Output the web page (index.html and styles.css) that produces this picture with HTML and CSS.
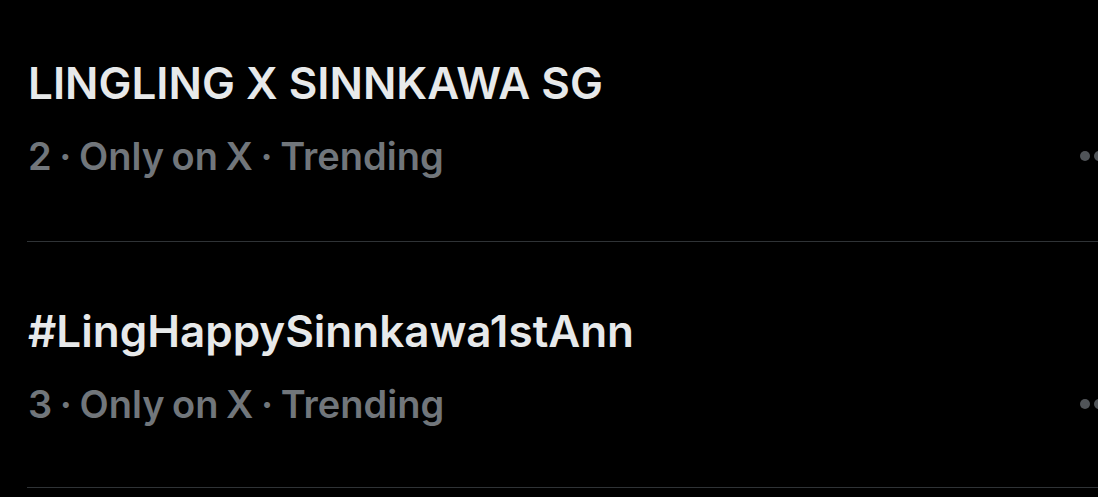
FILE: index.html
```html
<!DOCTYPE html>
<html lang="en">
<head>
  <meta charset="UTF-8" />
  <title>Trending</title>
  <link rel="stylesheet" href="styles.css">
</head>
<body>
  <div class="trends">
    <div class="trend">
      <div class="trend-name">LINGLING X SINNKAWA SG</div>
      <div class="trend-row">
        <div class="trend-meta">2 · Only on X · Trending</div>
        <svg class="more" viewBox="0 0 40 12" width="40" height="12">
          <circle cx="6" cy="6" r="5" />
          <circle cx="20" cy="6" r="5" />
          <circle cx="34" cy="6" r="5" />
        </svg>
      </div>
    </div>
    <div class="trend">
      <div class="trend-name">#LingHappySinnkawa1stAnn</div>
      <div class="trend-row">
        <div class="trend-meta">3 · Only on X · Trending</div>
        <svg class="more" viewBox="0 0 40 12" width="40" height="12">
          <circle cx="6" cy="6" r="5" />
          <circle cx="20" cy="6" r="5" />
          <circle cx="34" cy="6" r="5" />
        </svg>
      </div>
    </div>
  </div>
</body>
</html>
```

FILE: styles.css
```css
html, body {
  margin: 0;
  padding: 0;
  height: 100%;
  background: #000;
  overflow: hidden;
  font-family: Inter, Roboto, "Liberation Sans", sans-serif;
}

.trends {
  padding-left: 27px;
  width: calc(100% + 21px);
  box-sizing: border-box;
}

.trend {
  border-bottom: 1px solid #2f3336;
  padding: 67px 0 0 1px;
  height: 246px;
  box-sizing: border-box;
}

.trend:first-child {
  padding-top: 61px;
  height: 242px;
}

.trend-name {
  color: #e7e9ea;
  font-size: 44px;
  font-weight: 600;
  line-height: 44px;
}

.trend-row {
  display: flex;
  justify-content: space-between;
  align-items: center;
  margin-top: 32px;
}

.trend-meta {
  color: #71767b;
  font-size: 38px;
  font-weight: 600;
  line-height: 38px;
  word-spacing: -2px;
}

.more {
  fill: #505458;
}
```
